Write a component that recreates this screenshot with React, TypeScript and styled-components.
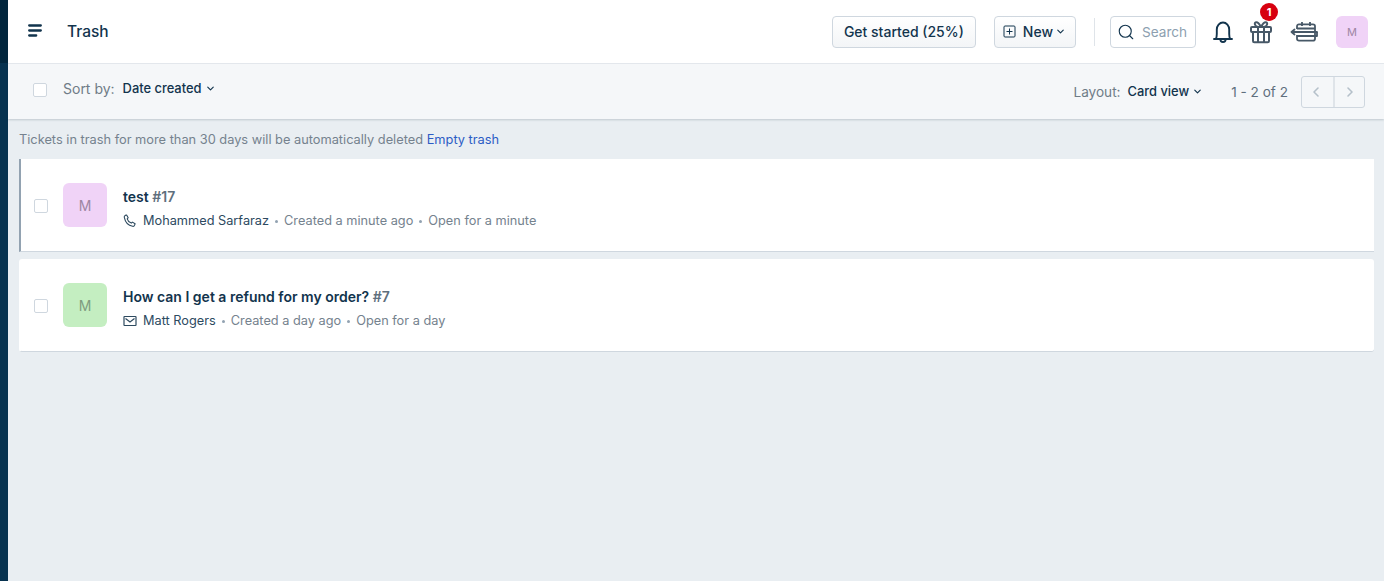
import React from "react";
import styled, { createGlobalStyle } from "styled-components";
import { ChevronDown, ChevronLeft, ChevronRight, Search } from "lucide-react";

const GlobalStyle = createGlobalStyle`
  html, body {
    margin: 0;
    padding: 0;
    height: 100%;
    background: #e9eef2;
  }
  body {
    font-family: Inter, "Liberation Sans", sans-serif;
    color: #12344d;
    overflow: hidden;
  }
  #root {
    height: 100%;
  }
`;

const Page = styled.div`
  display: flex;
  width: 1384px;
  height: 581px;
`;

const Rail = styled.div`
  width: 8px;
  flex: none;
  display: flex;
  flex-direction: column;
`;

const RailTop = styled.div`
  height: 63px;
  background: #02263d;
`;

const RailBottom = styled.div`
  flex: 1;
  background: #07324f;
`;

const Main = styled.div`
  flex: 1;
  display: flex;
  flex-direction: column;
  min-width: 0;
`;

const Header = styled.header`
  height: 63px;
  flex: none;
  display: flex;
  align-items: center;
  background: #fff;
  border-bottom: 1px solid #e6eaee;
  padding: 0 16px 0 20px;
`;

const MenuButton = styled.div`
  width: 14px;
  height: 13px;
  display: flex;
  color: #12344d;
  margin-top: -2px;
`;

const Title = styled.h1`
  margin: 0 0 0 25px;
  font-size: 15.5px;
  line-height: 20px;
  font-weight: 500;
  color: #12344d;
  flex: 1;
`;

const HeaderButton = styled.button`
  height: 32px;
  box-sizing: border-box;
  display: flex;
  align-items: center;
  border: 1px solid #cfd7df;
  border-radius: 4px;
  background: linear-gradient(180deg, #fff 0%, #f3f5f7 100%);
  color: #12344d;
  font-family: inherit;
  font-size: 14px;
  font-weight: 500;
  padding: 0 11px;
  white-space: nowrap;
`;

const NewButton = styled(HeaderButton)`
  margin-left: 18px;
  padding: 0 9px 0 8px;
  gap: 7px;
  svg:last-child {
    margin-left: -5px;
  }
`;

const Divider = styled.div`
  width: 1px;
  height: 28px;
  background: #dfe4e9;
  margin: 0 15px 0 18px;
`;

const SearchBox = styled.div`
  width: 86px;
  height: 32px;
  box-sizing: border-box;
  display: flex;
  align-items: center;
  gap: 7px;
  padding-left: 6px;
  border: 1px solid #cfd7df;
  border-radius: 4px;
  color: #8d9fb0;
  font-size: 13.6px;
  background: #fff;
`;

const IconSlot = styled.div<{ $left: number; $width: number }>`
  position: relative;
  margin-left: ${(p) => p.$left}px;
  width: ${(p) => p.$width}px;
  height: 32px;
  display: flex;
  align-items: center;
  justify-content: center;
`;

const Badge = styled.span`
  position: absolute;
  top: -13px;
  left: 11px;
  width: 18px;
  height: 18px;
  border-radius: 50%;
  background: #d7000f;
  color: #fff;
  font-size: 11px;
  font-weight: 700;
  line-height: 18px;
  text-align: center;
`;

const Avatar = styled.div<{ $bg: string; $size: number; $font: number; $color: string }>`
  width: ${(p) => p.$size}px;
  height: ${(p) => p.$size}px;
  flex: none;
  border-radius: 6px;
  background: ${(p) => p.$bg};
  color: ${(p) => p.$color};
  font-size: ${(p) => p.$font}px;
  display: flex;
  align-items: center;
  justify-content: center;
`;

const HeaderAvatar = styled(Avatar)`
  margin-left: 18px;
`;

const Toolbar = styled.div`
  height: 55px;
  flex: none;
  box-sizing: border-box;
  display: flex;
  align-items: center;
  background: #f5f7f9;
  box-shadow: 0 1px 2px rgba(24, 50, 71, 0.2);
  padding: 0 19px 0 25px;
  position: relative;
`;

const CheckBox = styled.span`
  width: 14px;
  height: 14px;
  flex: none;
  outline: 1px solid #cfd7df;
  outline-offset: -1px;
  border-radius: 2px;
  background: #fff;
`;

const ToolbarBox = styled(CheckBox)`
  margin-top: -3px;
`;

const SortGroup = styled.div`
  display: flex;
  align-items: center;
  margin-left: 16px;
  margin-top: -7px;
  flex: 1;
`;

const Label = styled.span`
  font-size: 14px;
  color: #6f7c87;
  margin-right: 8px;
`;

const LayoutLabel = styled(Label)`
  font-size: 13.6px;
  margin-right: 7px;
`;

const Dropdown = styled.span`
  display: flex;
  align-items: center;
  gap: 3px;
  font-size: 12.9px;
  font-weight: 500;
  color: #12344d;
`;

const Range = styled.span`
  font-size: 13.6px;
  color: #5f6f7d;
  margin-left: 28px;
`;

const Pager = styled.div`
  display: flex;
  margin-left: 13px;
  border: 1px solid #cfd7df;
  border-radius: 3px;
  height: 32px;
  box-sizing: border-box;
`;

const PagerCell = styled.div`
  width: 31px;
  box-sizing: border-box;
  padding-right: 3px;
  display: flex;
  align-items: center;
  justify-content: center;
  color: #b5c0ca;
  & + & {
    border-left: 2px solid #dfe4e9;
    padding-right: 0;
  }
`;

const LayoutGroup = styled.div`
  display: flex;
  align-items: center;
`;

const Notice = styled.p`
  margin: 0;
  padding: 13px 0 0 11px;
  font-size: 12.8px;
  line-height: 16px;
  color: #75828e;
`;

const NoticeLink = styled.a`
  color: #2c5cc5;
`;

const CardList = styled.div`
  display: flex;
  flex-direction: column;
  gap: 7px;
  padding: 11px 10px 0 11px;
`;

const Card = styled.article<{ $active?: boolean }>`
  height: 93px;
  box-sizing: border-box;
  display: flex;
  align-items: center;
  background: #fff;
  border-radius: ${(p) => (p.$active ? "0" : "3px")};
  border-left: 2px solid ${(p) => (p.$active ? "#92a2b1" : "transparent")};
  border-bottom: 1px solid #cfd7df;
  padding-left: 13px;
`;

const CardBox = styled(CheckBox)`
  margin: 2px 15px 0 0;
`;

const CardBody = styled.div`
  margin: 7px 0 0 16px;
  display: flex;
  flex-direction: column;
  gap: 6px;
`;

const CardTitle = styled.div`
  font-size: 14px;
  line-height: 18px;
  font-weight: 600;
  color: #12344d;
`;

const TicketNo = styled.span`
  color: #5f6f7d;
`;

const Meta = styled.div`
  display: flex;
  align-items: center;
  font-size: 12.75px;
  line-height: 18px;
  color: #75828e;
`;

const MetaIcon = styled.span`
  display: flex;
  width: 14px;
  height: 14px;
  margin-right: 6px;
  color: #2d4a5f;
`;

const Requester = styled.span`
  color: #2d4a5f;
`;

const Dot = styled.span`
  width: 3px;
  height: 3px;
  border-radius: 50%;
  background: #92a2b1;
  margin: 1px 6px 0;
`;

const tickets = [
  {
    title: "test",
    no: "#17",
    avatar: "#f0d3f7",
    avatarText: "#9d86a3",
    requester: "Mohammed Sarfaraz",
    created: "Created a minute ago",
    open: "Open for a minute",
    channel: "phone",
    active: true,
  },
  {
    title: "How can I get a refund for my order?",
    no: "#7",
    avatar: "#c4eec1",
    avatarText: "#7f9c80",
    requester: "Matt Rogers",
    created: "Created a day ago",
    open: "Open for a day",
    channel: "mail",
    active: false,
  },
];

const PhoneGlyph = () => (
  <svg viewBox="0 0 14 14" width="14" height="14" fill="none" stroke="currentColor" strokeWidth="1.100">
    <path d="M2.200 1.400 3.600 1l1.600 2.700-1 1.100c.5 1.800 2.200 3.600 4.100 4.300l1.100-1 2.700 1.600-.5 1.400c-.3.9-1.100 1.400-2 1.200C5.400 11.600 2.300 8.300 1.300 3.400c-.2-.9.200-1.700.9-2z" strokeLinejoin="round" />
  </svg>
);

const MailGlyph = () => (
  <svg viewBox="0 0 14 14" width="14" height="14" fill="none" stroke="currentColor" strokeWidth="1.200">
    <rect x="1" y="2.500" width="12" height="9" rx="0.500" />
    <path d="M2.500 4.500 7 8l4.500-3.500" />
  </svg>
);

const BellGlyph = () => (
  <svg viewBox="0 0 22 24" width="22" height="24" fill="none" stroke="#12344d" strokeWidth="1.900">
    <path d="M2 19h18" strokeLinecap="round" />
    <path d="M3.800 19c.8-1.400 1-3 1-5V9.500c0-3.900 2.700-7 6.200-7s6.200 3.100 6.200 7V14c0 2 .2 3.600 1 5" />
    <path d="M8.400 19.200c0 1.700 1.100 2.800 2.600 2.800s2.600-1.100 2.600-2.800" />
  </svg>
);

const GiftGlyph = () => (
  <svg viewBox="0 0 22 24" width="22" height="24" fill="none" stroke="#475867" strokeWidth="2" strokeLinejoin="round">
    <rect x="1" y="7" width="20" height="5" rx="1" />
    <path d="M3 12v9c0 .8.500 1.300 1.300 1.300h13.400c.8 0 1.300-.5 1.300-1.300v-9" />
    <path d="M8 7v15.300M14 7v15.300" />
    <path d="M11 7C9.500 4 7.500 2 6 2.200 4 2.500 4.500 6.200 8 7M11 7c1.500-3 3.500-5 5-4.800 2 .3 1.500 4-2 4.800" />
  </svg>
);

const CalendarGlyph = () => (
  <svg viewBox="0 0 28 22" width="28" height="22" fill="none" stroke="#475867" strokeWidth="1.800" strokeLinejoin="round">
    <path d="M7 8V5.200C7 4 7.800 3.300 9 3.300h14c1.200 0 2 .7 2 1.900v12.600c0 1.200-.8 1.900-2 1.900H9c-1.200 0-2-.7-2-1.900V14" />
    <path d="M7 7.500h18M12 1v4M20 1v4" />
    <path d="M1.500 11h25.500M4.500 8.500 1.500 11l3 2.500" strokeLinecap="round" />
    <path d="M7 15h20v-4" />
  </svg>
);

export default function App() {
  return (
    <>
      <GlobalStyle />
      <Page>
        <Rail>
          <RailTop />
          <RailBottom />
        </Rail>
        <Main>
          <Header>
            <MenuButton>
              <svg viewBox="0 0 14 13" width="14" height="13" fill="none" stroke="currentColor" strokeWidth="2.300" strokeLinecap="round">
                <path d="M1.200 1.500h11.600M1.200 6.500h11.600M1.200 11.500h7" />
              </svg>
            </MenuButton>
            <Title>Trash</Title>
            <HeaderButton>Get started (25%)</HeaderButton>
            <NewButton>
              <svg viewBox="0 0 13 13" width="13" height="13" fill="none" stroke="currentColor" strokeWidth="1">
                <rect x="1" y="1" width="11" height="11" rx="1" />
                <path d="M6.500 3.500v6M3.500 6.500h6" />
              </svg>
              New
              <ChevronDown size={11} strokeWidth={2.500} />
            </NewButton>
            <Divider />
            <SearchBox>
              <Search size={18} color="#12344d" strokeWidth={1.500} />
              Search
            </SearchBox>
            <IconSlot $left={15} $width={24}>
              <BellGlyph />
            </IconSlot>
            <IconSlot $left={14} $width={24}>
              <GiftGlyph />
              <Badge>1</Badge>
            </IconSlot>
            <IconSlot $left={17} $width={28}>
              <CalendarGlyph />
            </IconSlot>
            <HeaderAvatar $bg="#f0d3f7" $size={32} $font={11} $color="#9d86a3">M</HeaderAvatar>
          </Header>
          <Toolbar>
            <ToolbarBox />
            <SortGroup>
              <Label>Sort by:</Label>
              <Dropdown>
                Date created
                <ChevronDown size={11} strokeWidth={2.500} />
              </Dropdown>
            </SortGroup>
            <LayoutGroup>
              <LayoutLabel>Layout:</LayoutLabel>
              <Dropdown>
                Card view
                <ChevronDown size={11} strokeWidth={2.500} />
              </Dropdown>
              <Range>1 - 2 of 2</Range>
            </LayoutGroup>
            <Pager>
              <PagerCell>
                <ChevronLeft size={16} strokeWidth={2.400} />
              </PagerCell>
              <PagerCell>
                <ChevronRight size={16} strokeWidth={2.400} />
              </PagerCell>
            </Pager>
          </Toolbar>
          <Notice>
            Tickets in trash for more than 30 days will be automatically deleted <NoticeLink>Empty trash</NoticeLink>
          </Notice>
          <CardList>
            {tickets.map((t) => (
              <Card key={t.no} $active={t.active}>
                <CardBox />
                <Avatar $bg={t.avatar} $size={44} $font={14} $color={t.avatarText}>M</Avatar>
                <CardBody>
                  <CardTitle>
                    {t.title} <TicketNo>{t.no}</TicketNo>
                  </CardTitle>
                  <Meta>
                    <MetaIcon>{t.channel === "phone" ? <PhoneGlyph /> : <MailGlyph />}</MetaIcon>
                    <Requester>{t.requester}</Requester>
                    <Dot />
                    {t.created}
                    <Dot />
                    {t.open}
                  </Meta>
                </CardBody>
              </Card>
            ))}
          </CardList>
        </Main>
      </Page>
    </>
  );
}
